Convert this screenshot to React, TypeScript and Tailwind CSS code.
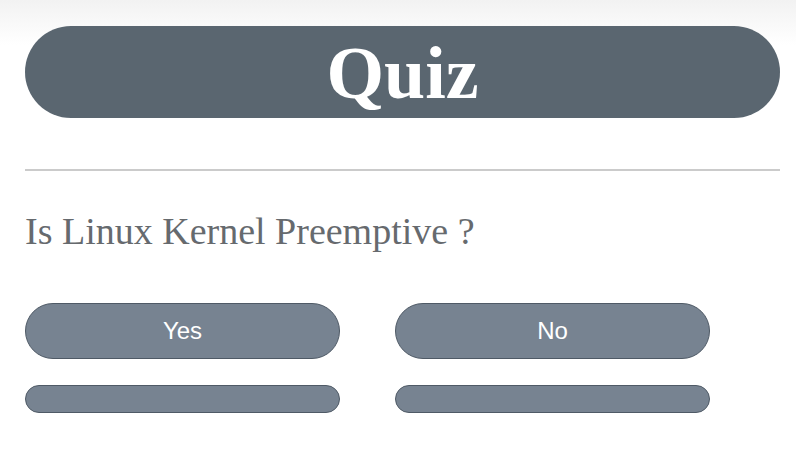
export default function App() {
  return (
    <main className="w-[796px] h-[461px] bg-[linear-gradient(to_bottom,#f2f2f2,#ffffff_45px)] pt-[26px] px-[25px] overflow-hidden">
      <div className="w-[755px] h-[92px] rounded-full bg-[#5a6670] flex items-center justify-center">
        <h1
          className="text-white font-bold text-[74px] leading-none pt-[2px]"
          style={{ fontFamily: '"Liberation Serif", serif' }}
        >
          Quiz
        </h1>
      </div>
      <hr className="mt-[51px] w-[755px] border-0 h-[2px] bg-[#cbcbcb]" />
      <p
        className="mt-[41px] text-[38px] leading-none text-[#666a6e]"
        style={{ fontFamily: '"Liberation Serif", serif' }}
      >
        Is Linux Kernel Preemptive ?
      </p>
      <div
        className="mt-[53px] grid grid-cols-[315px_315px] gap-x-[55px] gap-y-[26px]"
        style={{ fontFamily: '"Liberation Sans", Arial, sans-serif' }}
      >
        <button className="h-[56px] rounded-full bg-[#778391] border border-[#4f5a66] text-white text-[24px]">
          Yes
        </button>
        <button className="h-[56px] rounded-full bg-[#778391] border border-[#4f5a66] text-white text-[24px]">
          No
        </button>
        <div className="h-[28px] rounded-full bg-[#778391] border border-[#4f5a66]" />
        <div className="h-[28px] rounded-full bg-[#778391] border border-[#4f5a66]" />
      </div>
    </main>
  );
}
